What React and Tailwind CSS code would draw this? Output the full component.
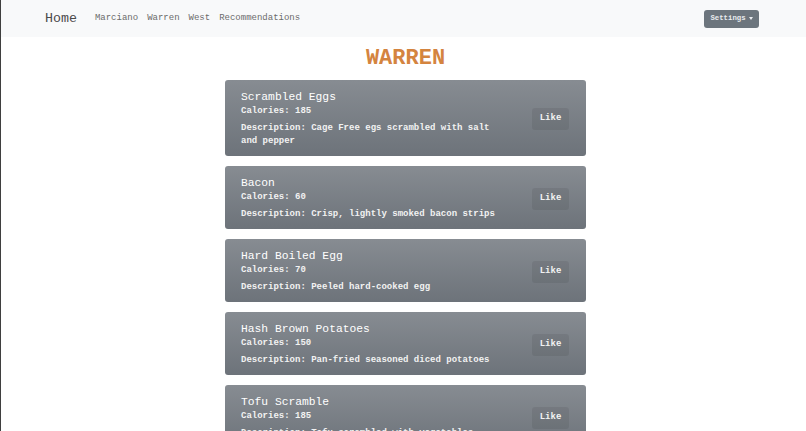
import React from 'react';

const FONT = { fontFamily: '"Liberation Mono", "Courier New", monospace' };

const ITEMS = [
  { name: 'Scrambled Eggs', calories: 185, description: 'Cage Free egs scrambled with salt and pepper' },
  { name: 'Bacon', calories: 60, description: 'Crisp, lightly smoked bacon strips' },
  { name: 'Hard Boiled Egg', calories: 70, description: 'Peeled hard-cooked egg' },
  { name: 'Hash Brown Potatoes', calories: 150, description: 'Pan-fried seasoned diced potatoes' },
  { name: 'Tofu Scramble', calories: 185, description: 'Tofu scrambled with vegetables' }
];

const Navbar = () => (
  <nav className="flex h-[37px] items-center bg-[#f8f9fa] pl-[44px] pr-[47px]">
    <span className="text-[13.3px] leading-none text-[#4a4a4a]">Home</span>
    <div className="ml-[18px] flex items-center gap-[9px] text-[9px] leading-none text-[#6b6b6b]">
      <span>Marciano</span>
      <span>Warren</span>
      <span>West</span>
      <span>Recommendations</span>
    </div>
    <button className="ml-auto flex h-[18px] w-[55px] items-center justify-center gap-[3px] rounded-[3px] bg-[#6c757d] text-[7.3px] font-bold text-[#e9ecef]">
      Settings
      <span className="h-0 w-0 border-x-[2.5px] border-t-[3px] border-x-transparent border-t-[#e9ecef]" />
    </button>
  </nav>
);

const FoodCard = ({ item }) => (
  <div className="flex items-center rounded-[3px] bg-gradient-to-b from-[#878c92] to-[#6d737a] pb-[8px] pl-[16px] pr-[17px] pt-[10px] text-[#f2f2f2]">
    <div className="w-[268px]">
      <div className="text-[11.3px] leading-[14px] text-white">{item.name}</div>
      <div className="text-[9px] font-bold leading-[14px]">Calories: {item.calories}</div>
      <div className="mt-[4px] text-[9px] font-bold leading-[13px]">
        Description: {item.description}
      </div>
    </div>
    <button className="ml-auto h-[22px] w-[37px] rounded-[3px] bg-black/[0.07] text-[9px] font-bold text-[#f2f2f2]">
      Like
    </button>
  </div>
);

const App = () => {
  return (
    <div className="h-[431px] overflow-hidden border-l border-[#3f3f3f] bg-white" style={FONT}>
      <Navbar />
      <main className="flex flex-col items-center pl-[4px]">
        <h1 className="mt-[11px] text-[22px] font-bold leading-[22px] text-[#d4843f]">WARREN</h1>
        <div className="mt-[10px] flex w-[361px] flex-col gap-[10px]">
          {ITEMS.map((item) => (
            <FoodCard key={item.name} item={item} />
          ))}
        </div>
      </main>
    </div>
  );
};

export default App;
